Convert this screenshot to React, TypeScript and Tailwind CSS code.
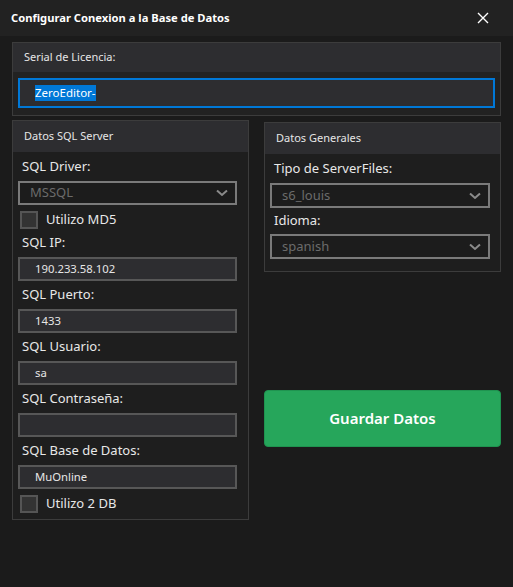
import React from "react";

const font = { fontFamily: '"Noto Sans", "Open Sans", sans-serif' };

function Chevron() {
  return (
    <svg width="12" height="7" viewBox="0 0 12 7" className="absolute right-[7px] top-1/2 -translate-y-1/2">
      <path d="M1 1 L6 5.5 L11 1" stroke="#8a8a8a" strokeWidth="2" fill="none" />
    </svg>
  );
}

function Select({ value, h = "h-[24px]" }: { value: string; h?: string }) {
  return (
    <div className={`relative ${h} border-2 border-[#7a7a7a] bg-[#1c1c1c] flex items-center pl-[10px] text-[13px] text-[#6b6b6b]`}>
      {value}
      <Chevron />
    </div>
  );
}

function Input({ value }: { value: string }) {
  return (
    <div className="h-[24px] border-2 border-[#575757] bg-[#2d2d30] flex items-center pl-[15px] text-[11.3px] text-[#e6e6e6]">
      {value}
    </div>
  );
}

function Label({ text, h = "h-[28px]" }: { text: string; h?: string }) {
  return (
    <div className={`${h} flex items-center pl-[4px] text-[13px] text-[#e8e8e8]`}>{text}</div>
  );
}

function Check({ text }: { text: string }) {
  return (
    <div className="h-[19px] flex items-center gap-[8px] pl-[2px]">
      <div className="w-[18px] h-[18px] border-2 border-[#555555] bg-[#333333]" />
      <span className="text-[13px] text-[#e8e8e8]">{text}</span>
    </div>
  );
}

function Box({ title, children, className = "" }: { title: string; children: React.ReactNode; className?: string }) {
  return (
    <div className={`border border-[#3c3c3c] bg-[#1e1e1e] ${className}`}>
      <div className="h-[31px] bg-[#2d2d30] flex items-center pl-[11px] text-[11px] text-[#e6e6e6]">{title}</div>
      {children}
    </div>
  );
}

export default function App() {
  return (
    <div style={font} className="w-[513px] h-[587px] bg-[#1b1b1b] flex flex-col overflow-hidden">
      <div className="h-[36px] bg-[#222222] flex items-center justify-between pl-[11px] pr-[24px] shrink-0">
        <span className="text-[11.2px] font-bold text-white">Configurar Conexion a la Base de Datos</span>
        <svg width="12" height="12" viewBox="0 0 12 12">
          <path d="M1 1 L11 11 M11 1 L1 11" stroke="#ffffff" strokeWidth="1.4" />
        </svg>
      </div>
      <div className="pl-[12px] pr-[12px] pt-[6px] flex flex-col">
        <div className="border border-[#3c3c3c] bg-[#222222]">
          <div className="h-[29px] bg-[#2d2d30] flex items-center pl-[11px] text-[11px] text-[#e6e6e6]">Serial de Licencia:</div>
          <div className="px-[5px] pt-[6px] pb-[7px]">
            <div className="h-[30px] border-2 border-[#0078d7] bg-[#2d2d30] flex items-center pl-[15px]">
              <span className="bg-[#0078d7] text-white text-[11.5px] leading-[16px]">ZeroEditor-</span>
            </div>
          </div>
        </div>
        <div className="mt-[4px] grid grid-cols-[237px_237px] gap-[15px] items-start">
          <Box title="Datos SQL Server">
            <div className="pl-[5px] pr-[11px] pb-[6px] flex flex-col">
              <Label text="SQL Driver:" h="h-[29px]" />
              <Select value="MSSQL" />
              <div className="mt-[5px]"><Check text="Utilizo MD5" /></div>
              <Label text="SQL IP:" />
              <Input value="190.233.58.102" />
              <Label text="SQL Puerto:" />
              <Input value="1433" />
              <Label text="SQL Usuario:" />
              <Input value="sa" />
              <Label text="SQL Contraseña:" />
              <Input value="" />
              <Label text="SQL Base de Datos:" />
              <Input value="MuOnline" />
              <div className="mt-[5px]"><Check text="Utilizo 2 DB" /></div>
            </div>
          </Box>
          <div className="flex flex-col mt-[2px]">
            <Box title="Datos Generales">
              <div className="pl-[5px] pr-[10px] pb-[12px] flex flex-col">
                <Label text="Tipo de ServerFiles:" h="h-[29px]" />
                <Select value="s6_louis" h="h-[25px]" />
                <Label text="Idioma:" h="h-[26px]" />
                <Select value="spanish" h="h-[25px]" />
              </div>
            </Box>
            <button className="mt-[118px] h-[57px] rounded-[4px] bg-[#26a65b] border border-[#1f9450] text-white text-[15px] font-semibold">
              Guardar Datos
            </button>
          </div>
        </div>
      </div>
    </div>
  );
}
